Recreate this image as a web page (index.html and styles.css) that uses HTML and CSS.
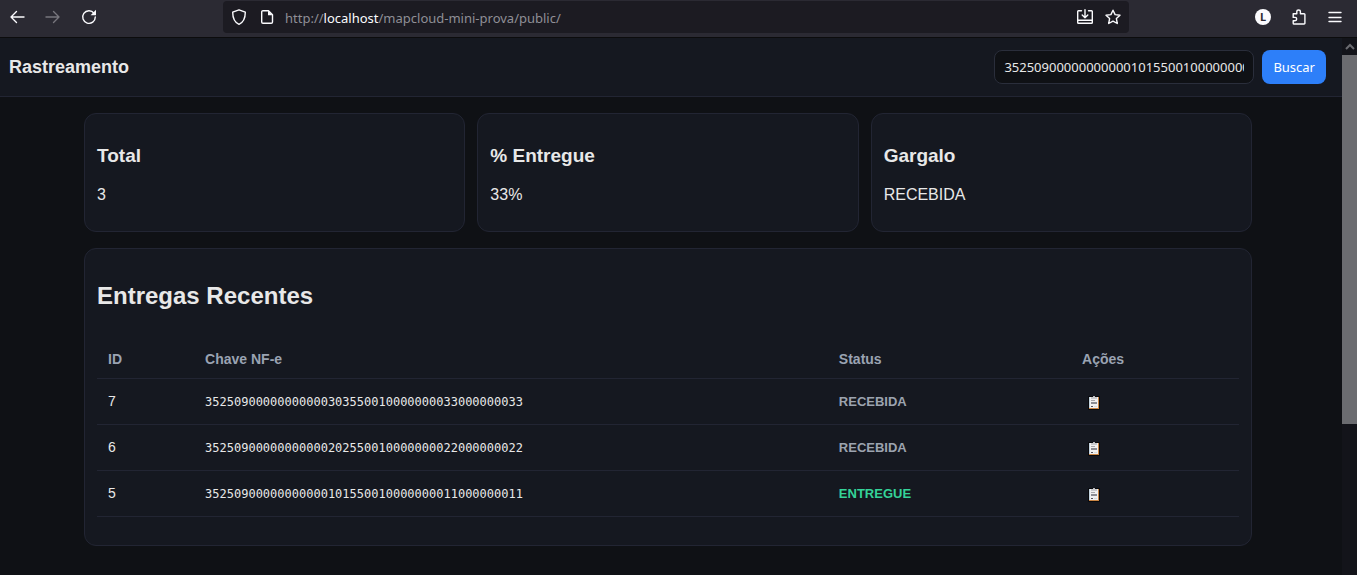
FILE: index.html
```html
<!DOCTYPE html>
<html lang="pt-BR">
<head>
<meta charset="utf-8">
<title>Rastreamento</title>
<link rel="stylesheet" href="styles.css">
</head>
<body>
<svg class="defs" width="0" height="0" aria-hidden="true">
  <symbol id="clipboard" viewBox="0 0 12 15">
    <rect x="0" y="1" width="12" height="14" rx="1" fill="#08090c"/>
    <rect x="1" y="2" width="10" height="12" fill="#c98443"/>
    <rect x="1" y="2" width="9" height="11" fill="#f1f0f0"/>
    <rect x="1" y="2" width="1" height="11" fill="#c3d3df"/>
    <path d="M3 2h6v2H3z" fill="#c9c9cc"/>
    <path d="M5 1h2v1H5z" fill="#b9b9bd"/>
    <path d="M3 5h4v1H3z" fill="#a9a7aa"/>
    <path d="M3 7h6v2H3z" fill="#8c8c92"/>
    <path d="M3 11h2v1H3z" fill="#55535c"/>
    <path d="M6 11h3v1H6z" fill="#dadada"/>
  </symbol>
</svg>
<div class="browser">
  <nav class="toolbar" aria-label="Navegador">
    <div class="nav-buttons">
      <button class="tool" aria-label="Voltar"><svg width="16" height="16" viewBox="0 0 16 16"><path d="M15 8H2M7.500 2.500 2 8l5.500 5.500"/></svg></button>
      <button class="tool tool-off" aria-label="Avançar" disabled><svg width="16" height="16" viewBox="0 0 16 16"><path d="M1 8h13M8.500 2.500 14 8l-5.500 5.500"/></svg></button>
      <button class="tool" aria-label="Recarregar"><svg width="16" height="16" viewBox="0 0 16 16"><path d="M13 4.200A6.300 6.300 0 1 0 14.300 8"/><path class="solid" d="M15 .8v5.400H9.600z"/></svg></button>
    </div>
    <div class="address">
      <svg width="16" height="16" viewBox="0 0 16 16"><path d="M8 .8 14.300 3.200C14.300 9.500 12 13.500 8 15.300 4 13.500 1.700 9.500 1.700 3.200z"/></svg>
      <svg class="page-icon" width="16" height="16" viewBox="0 0 16 16"><path d="M4 1.700h5.500l4 4V13a1.300 1.300 0 0 1-1.300 1.300H4A1.300 1.300 0 0 1 2.700 13V3A1.300 1.300 0 0 1 4 1.700z"/><path class="solid" d="M9 1.500 13.700 6.200H9z"/></svg>
      <span class="url">http://<b>localhost</b>/mapcloud-mini-prova/public/</span>
      <button class="tool" aria-label="Instalar"><svg width="16" height="16" viewBox="0 0 16 16"><path d="M4.500 1.700H1.500a.8.8 0 0 0-.8.8v11a.8.8 0 0 0 .8.8h13a.8.8 0 0 0 .8-.8v-11a.8.8 0 0 0-.8-.8h-3M.7 11.300h14.600M8 .7v8M5.200 6 8 8.800 10.800 6"/></svg></button>
      <button class="tool" aria-label="Favoritar"><svg width="16" height="16" viewBox="0 0 16 16"><path d="M8 1.200 10.100 5.600 15 6.200 11.400 9.600 12.300 14.500 8 12.100 3.700 14.500 4.600 9.600 1 6.200 5.900 5.600z"/></svg></button>
    </div>
    <div class="extras">
      <button class="avatar" aria-label="Conta">L</button>
      <button class="tool" aria-label="Extensões"><svg width="16" height="16" viewBox="0 0 16 16"><path d="M2.200 5.200V4.700H5.800V2.800a1.800 1.800 0 0 1 3.600 0V4.700h3.700a.8.8 0 0 1 .8.8v8.700a.8.8 0 0 1-.8.8H3a.8.8 0 0 1-.8-.8V11.800H4a1.700 1.700 0 0 0 0-3.400H2.200V5.200"/></svg></button>
      <button class="tool" aria-label="Menu"><svg width="16" height="16" viewBox="0 0 16 16"><path d="M2 3.500h12M2 8.500h12M2 12.500h12"/></svg></button>
    </div>
  </nav>
  <div class="viewport">
    <div class="page">
      <header class="header">
        <h1>Rastreamento</h1>
        <form class="search">
          <input type="text" aria-label="Chave NF-e" value="35250900000000000101550010000000011000000011">
          <button type="button">Buscar</button>
        </form>
      </header>
      <main class="main">
        <section class="cards">
          <article class="card"><h3>Total</h3><p>3</p></article>
          <article class="card"><h3>% Entregue</h3><p>33%</p></article>
          <article class="card"><h3>Gargalo</h3><p>RECEBIDA</p></article>
        </section>
        <section class="card panel">
          <h2>Entregas Recentes</h2>
          <table>
            <thead>
              <tr><th class="col-id">ID</th><th class="col-key">Chave NF-e</th><th class="col-status">Status</th><th>Ações</th></tr>
            </thead>
            <tbody>
              <tr><td>7</td><td class="key">35250900000000000303550010000000033000000033</td><td class="status">RECEBIDA</td><td><button class="copy" aria-label="Copiar chave"><svg width="12" height="15"><use href="#clipboard"/></svg></button></td></tr>
              <tr><td>6</td><td class="key">35250900000000000202550010000000022000000022</td><td class="status">RECEBIDA</td><td><button class="copy" aria-label="Copiar chave"><svg width="12" height="15"><use href="#clipboard"/></svg></button></td></tr>
              <tr><td>5</td><td class="key">35250900000000000101550010000000011000000011</td><td class="status delivered">ENTREGUE</td><td><button class="copy" aria-label="Copiar chave"><svg width="12" height="15"><use href="#clipboard"/></svg></button></td></tr>
            </tbody>
          </table>
        </section>
      </main>
    </div>
    <div class="scrollbar" aria-hidden="true">
      <svg width="15" height="17" viewBox="0 0 15 17"><path d="M4 11 8 7l4 4"/></svg>
      <div class="track"><div class="thumb"></div></div>
    </div>
  </div>
</div>
</body>
</html>
```
FILE: styles.css
```css
* { box-sizing: border-box; }

body {
  margin: 0;
  background: #0f1115;
  color: #e8e8e8;
  font: 16px "Liberation Sans", Arial, sans-serif;
}

button { border: 0; padding: 0; background: none; color: inherit; }
.defs { display: block; }

.browser { display: flex; flex-direction: column; min-height: 100vh; }

/* Browser toolbar */
.toolbar {
  display: flex;
  align-items: center;
  gap: 94px;
  padding: 1px 14px 4px 9px;
  background: #2b2a33;
  border-bottom: 1px solid #0c0c0d;
  color: #fbfbfe;
}
.toolbar svg { display: block; fill: none; stroke: currentColor; stroke-width: 1.4; stroke-linejoin: round; stroke-linecap: round; }
.toolbar svg .solid { fill: currentColor; stroke: none; }
.nav-buttons { display: flex; gap: 20px; width: 120px; }
.tool-off { color: #77767d; }
.address {
  display: flex;
  align-items: center;
  flex: 1;
  gap: 12px;
  height: 32px;
  padding: 0 8px;
  border-radius: 4px;
  background: #1c1b22;
}
.page-icon { margin-right: -2px; }
.url { flex: 1; padding-top: 2px; color: #8f8f96; font: 13px "Noto Sans", sans-serif; }
.url b { color: #fbfbfe; font-weight: 400; }
.extras { display: flex; align-items: center; gap: 20px; margin-left: 32px; }
.avatar {
  width: 16px;
  height: 16px;
  border-radius: 50%;
  background: #fbfbfe;
  color: #2b2a33;
  font: bold 11px/16px "Noto Sans", sans-serif;
}

/* Page */
.viewport { display: flex; flex: 1; }
.page { flex: 1; min-width: 0; }
.header {
  display: flex;
  align-items: center;
  justify-content: space-between;
  padding: 12px 16px 12px 9px;
  background: #151820;
  border-bottom: 1px solid #222533;
}
h1 { margin: 0; font-size: 18px; }
.search { display: flex; gap: 8px; }
.search input {
  width: 260px;
  height: 34px;
  padding: 0 9px;
  border: 1px solid #2a2e3b;
  border-radius: 8px;
  background: #0f1115;
  color: #e8e8e8;
  font: 13px "Noto Sans", sans-serif;
}
.search button {
  padding: 0 11px;
  border-radius: 8px;
  background: #2d7ff9;
  color: #fff;
  font: 13px "Noto Sans", sans-serif;
}

.main { max-width: 1206px; margin: 0 auto; padding: 16px 22px 16px 16px; }
.cards { display: grid; grid-template-columns: repeat(3, 1fr); gap: 12px; margin-bottom: 16px; }
.card {
  padding: 12px;
  background: #151820;
  border: 1px solid #222533;
  border-radius: 12px;
}
h3 { margin: 19px 0 18px; font-size: 19px; line-height: 22px; }
.card p { margin: 16px 0 15px; line-height: 19px; }
h2 { margin: 21px 0 20px; font-size: 24px; line-height: 28px; }

table { width: 100%; margin: 31px 0 16px; border-collapse: collapse; table-layout: fixed; font-size: 14px; }
th, td { padding: 0 12px 0 11px; border-bottom: 1px solid #222533; text-align: left; }
th { height: 37px; color: #9aa3b2; }
td { height: 46px; }
.col-id { width: 8.5%; }
.col-key { width: 55.5%; }
.col-status { width: 21.3%; }
.key { padding-top: 1px; font: 12px "DejaVu Sans Mono", monospace; }
.status { color: #9ca3af; font-size: 13px; font-weight: 600; }
.status.delivered { color: #34d399; }
.copy { display: block; padding: 2px 6px 0; }
.copy svg { display: block; }

/* Scrollbar */
.scrollbar { display: flex; flex-direction: column; width: 15px; background: #13141a; }
.scrollbar svg { fill: none; stroke: #6a6b70; stroke-width: 2; }
.track { flex: 1; }
.thumb { height: 71%; background: #6b6c70; }
```
